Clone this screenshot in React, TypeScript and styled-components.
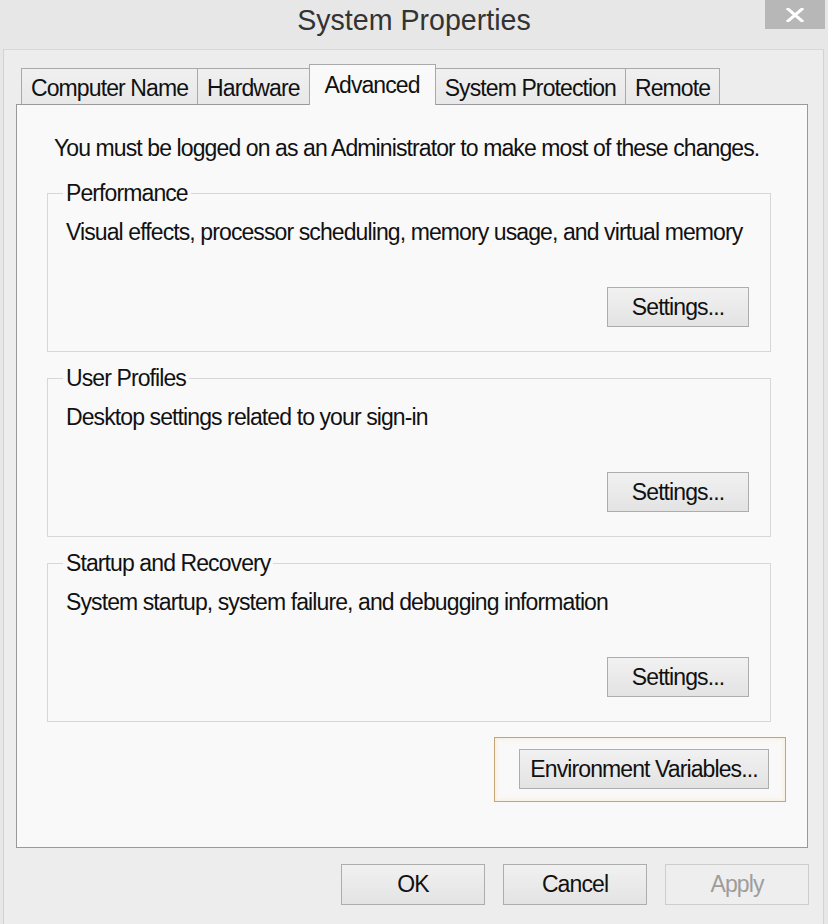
import React from "react";
import styled, { createGlobalStyle } from "styled-components";

const UI_FONT = `"Liberation Sans", Arial, sans-serif`;

const GlobalStyle = createGlobalStyle`
  html, body {
    margin: 0;
    padding: 0;
    width: 828px;
    height: 924px;
    overflow: hidden;
    background: #e7e7e7;
  }
  * { box-sizing: border-box; }
`;

const Window = styled.div`
  width: 828px;
  height: 924px;
  display: flex;
  flex-direction: column;
  background: #e7e7e7;
  font-family: ${UI_FONT};
  color: #111;
  font-size: 23px;
  letter-spacing: -0.9px;
`;

const TitleBar = styled.div`
  height: 49px;
  display: grid;
  grid-template-columns: 1fr auto 1fr;
  align-items: start;
`;

const Title = styled.div`
  grid-column: 2;
  margin-top: 4px;
  font-size: 28.6px;
  letter-spacing: 0;
  line-height: 32px;
  color: #333;
`;

const CloseButton = styled.div`
  grid-column: 3;
  justify-self: end;
  width: 60px;
  height: 29px;
  margin-right: 3px;
  background: #b7b7b7;
  display: flex;
  align-items: center;
  justify-content: center;
`;

const Client = styled.div`
  flex: 1;
  margin: 0 4px 0 3px;
  border-left: 1px solid #d3d3d3;
  border-right: 1px solid #d3d3d3;
  border-top: 1px solid #d8d8d8;
  background: #ededed;
  padding: 14px 15px 0 12px;
  display: flex;
  flex-direction: column;
`;

const TabRow = styled.div`
  height: 41px;
  margin-bottom: -1px;
  padding-left: 5px;
  display: flex;
  align-items: flex-end;
`;

const Tab = styled.div<{ $active?: boolean }>`
  position: relative;
  z-index: ${(p) => (p.$active ? 2 : 1)};
  height: ${(p) => (p.$active ? "41px" : "36px")};
  margin-bottom: ${(p) => (p.$active ? "0" : "1px")};
  margin-left: -1px;
  padding: ${(p) => (p.$active ? "2px 15px 0" : "3px 9px 0")};
  border: 1px solid #a9a9a9;
  border-bottom: none;
  background: ${(p) =>
    p.$active ? "#f9f9f9" : "linear-gradient(#f0f0f0, #e8e8e8)"};
  line-height: ${(p) => (p.$active ? "36px" : "33px")};
  white-space: nowrap;
  color: #111;
  &:first-child { margin-left: 0; }
`;

const Panel = styled.div`
  height: 744px;
  border: 1px solid #999999;
  background: #f9f9f9;
  padding: 29px 36px 0 30px;
  display: flex;
  flex-direction: column;
`;

const Notice = styled.p`
  margin: 0 0 17px 7px;
  line-height: 28px;
  white-space: nowrap;
`;

const Groups = styled.div`
  display: flex;
  flex-direction: column;
  gap: 12px;
`;

const GroupBox = styled.fieldset`
  margin: 0;
  min-inline-size: 0;
  border: 1px solid #d7d7d7;
  padding: 11px 21px 24px 15px;
  display: flex;
  flex-direction: column;
`;

const Legend = styled.legend`
  padding: 0 3px;
  line-height: 28px;
`;

const Description = styled.div`
  margin: 0 0 41px 3px;
  line-height: 28px;
  white-space: nowrap;
`;

const ButtonRow = styled.div`
  display: flex;
  justify-content: flex-end;
`;

const Button = styled.button<{ $w: number; $h?: number }>`
  width: ${(p) => p.$w}px;
  height: ${(p) => p.$h ?? 40}px;
  padding: 0;
  margin: 0;
  border: 1px solid #adadad;
  background: linear-gradient(#f1f1f1, #e3e3e3);
  font-family: ${UI_FONT};
  font-size: 23px;
  letter-spacing: -0.9px;
  line-height: 1;
  white-space: nowrap;
  color: #111;
  display: flex;
  align-items: center;
  justify-content: center;
  &:disabled {
    color: #9d9d9d;
    border-color: #cdcdcd;
    background: #eeeeee;
  }
`;

const EnvRow = styled.div`
  margin-top: 15px;
  display: flex;
  justify-content: flex-end;
  margin-right: -15px;
`;

const FocusFrame = styled.div`
  border: 1px solid #c2a475;
  box-shadow: inset 0 0 5px rgba(255, 200, 130, 0.35);
  padding: 11px 16px 12px 24px;
`;

const Footer = styled.div`
  margin-top: 16px;
  margin-right: -1px;
  display: flex;
  justify-content: flex-end;
  gap: 18px;
`;

const groups = [
  {
    title: "Performance",
    text: "Visual effects, processor scheduling, memory usage, and virtual memory",
  },
  { title: "User Profiles", text: "Desktop settings related to your sign-in" },
  {
    title: "Startup and Recovery",
    text: "System startup, system failure, and debugging information",
  },
];

const tabs = ["Computer Name", "Hardware", "Advanced", "System Protection", "Remote"];

export default function App() {
  return (
    <>
      <GlobalStyle />
      <Window>
        <TitleBar>
          <Title>System Properties</Title>
          <CloseButton>
            <svg width="18" height="14" viewBox="0 0 18 14">
              <path d="M2 1 L16 13 M16 1 L2 13" stroke="#fff" strokeWidth="3" strokeLinecap="square" />
            </svg>
          </CloseButton>
        </TitleBar>
        <Client>
          <TabRow>
            {tabs.map((t) => (
              <Tab key={t} $active={t === "Advanced"}>
                {t}
              </Tab>
            ))}
          </TabRow>
          <Panel>
            <Notice>You must be logged on as an Administrator to make most of these changes.</Notice>
            <Groups>
              {groups.map((g) => (
                <GroupBox key={g.title}>
                  <Legend>{g.title}</Legend>
                  <Description>{g.text}</Description>
                  <ButtonRow>
                    <Button $w={142}>Settings...</Button>
                  </ButtonRow>
                </GroupBox>
              ))}
            </Groups>
            <EnvRow>
              <FocusFrame>
                <Button $w={250}>Environment Variables...</Button>
              </FocusFrame>
            </EnvRow>
          </Panel>
          <Footer>
            <Button $w={144} $h={41}>OK</Button>
            <Button $w={144} $h={41}>Cancel</Button>
            <Button $w={144} $h={41} disabled>Apply</Button>
          </Footer>
        </Client>
      </Window>
    </>
  );
}
